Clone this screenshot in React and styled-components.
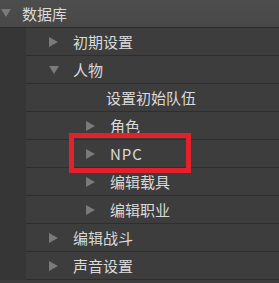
import styled, { createGlobalStyle } from "styled-components";

const GlobalStyles = createGlobalStyle`
  html, body {
    margin: 0;
    padding: 0;
    background: #3d3d3d;
    overflow: hidden;
  }
  body {
    font-family: "Noto Sans CJK SC", "Noto Sans", sans-serif;
  }
`;

const items = [
  { label: "初期设置", level: 1, arrow: "right" },
  { label: "人物", level: 1, arrow: "down" },
  { label: "设置初始队伍", level: 2, arrow: null },
  { label: "角色", level: 2, arrow: "right" },
  { label: "NPC", level: 2, arrow: "right", marked: true },
  { label: "编辑载具", level: 2, arrow: "right" },
  { label: "编辑职业", level: 2, arrow: "right" },
  { label: "编辑战斗", level: 1, arrow: "right" },
  { label: "声音设置", level: 1, arrow: "right" },
];

const Arrow = ({ dir }) =>
  dir === "down" ? (
    <svg width="10" height="8" viewBox="0 0 10 8">
      <path d="M0 0 L10 0 L5 8 Z" fill="#7a7a7a" />
    </svg>
  ) : (
    <svg width="9" height="10" viewBox="0 0 9 10">
      <path d="M0 0 L9 5 L0 10 Z" fill="#7a7a7a" />
    </svg>
  );

const App = () => {
  return (
    <>
      <GlobalStyles />
      <Tree>
        <Header>
          <HeaderArrow>
            <Arrow dir="down" />
          </HeaderArrow>
          <Label>数据库</Label>
        </Header>
        <Body>
          <Gutter />
          <List>
            {items.map((item) => (
              <Row key={item.label}>
                <Indent $level={item.level} $leaf={!item.arrow}>
                  {item.arrow && (
                    <ArrowSlot>
                      <Arrow dir={item.arrow} />
                    </ArrowSlot>
                  )}
                  <Label $latin={item.label === "NPC"}>{item.label}</Label>
                </Indent>
                {item.marked && <Marker />}
              </Row>
            ))}
          </List>
        </Body>
      </Tree>
    </>
  );
};

const Tree = styled.div`
  width: 279px;
  height: 283px;
  background: #3d3d3d;
  overflow: hidden;
`;

const Header = styled.div`
  height: 28px;
  display: flex;
  align-items: center;
  background: linear-gradient(#4d4d4d, #484848);
  border-bottom: 1px solid #2c2c2c;
  box-sizing: border-box;
`;

const HeaderArrow = styled.span`
  display: flex;
  width: 22px;
  padding-left: 1px;
  box-sizing: border-box;
  margin-top: -2px;
`;

const Body = styled.div`
  display: flex;
`;

const Gutter = styled.div`
  width: 26px;
  flex-shrink: 0;
  background: #363636;
`;

const List = styled.div`
  flex: 1;
`;

const Row = styled.div`
  position: relative;
  height: 28px;
  box-sizing: border-box;
  border-bottom: 1px solid #2e2e2e;
  display: flex;
  align-items: center;
  background: #3d3d3d;
`;

const Indent = styled.div`
  display: flex;
  align-items: center;
  padding-left: ${(p) =>
    p.$leaf ? "80px" : p.$level === 1 ? "23px" : "60px"};
`;

const ArrowSlot = styled.span`
  display: flex;
  width: 24px;
`;

const Label = styled.span`
  color: #dadada;
  font-size: 15px;
  line-height: 20px;
  letter-spacing: ${(p) => (p.$latin ? "1px" : "0")};
`;

const Marker = styled.div`
  position: absolute;
  z-index: 2;
  left: 43px;
  top: -7px;
  width: 122px;
  height: 40px;
  box-sizing: border-box;
  border: 5px solid #e3212b;
`;

export default App;
